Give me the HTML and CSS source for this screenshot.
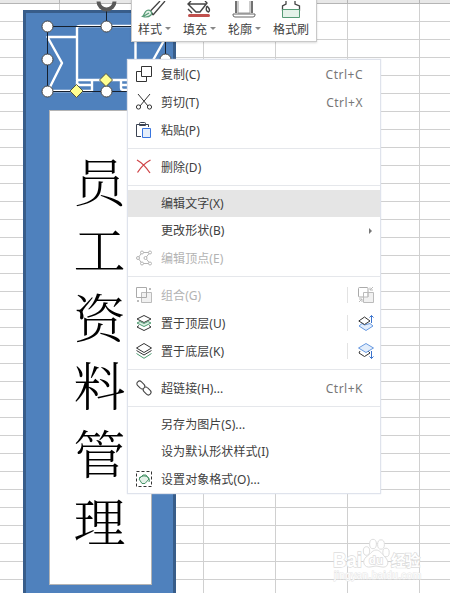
FILE: index.html
```html
<!DOCTYPE html>
<html lang="zh-CN">
<head>
<meta charset="utf-8">
<title>表格</title>
<link rel="stylesheet" href="styles.css">
</head>
<body>
<main class="sheet">
  <div class="header-strip"></div>
  <section class="binder">
    <div class="label"><span>员</span><span>工</span><span>资</span><span>料</span><span>管</span><span>理</span></div>
  </section>
  <svg class="selection" width="180" height="110" viewBox="0 0 180 110">
    <g fill="none" stroke="#fff" stroke-width="2.4" stroke-linejoin="round" stroke-linecap="round">
      <path d="M77 37H47.500L62 63L49 89V91H92V81M77 80V28Q77 26 80 26H132Q135.500 26 135.500 29V80H79Q77 80 77 82Q77 85 80 85H90M77 81V90M121 80V85H135M121 85V88Q121 90 124 90H165L152 62L166 37H136"/>
    </g>
    <path d="M47.500 26.500H165.500V91.500H47.500ZM106.500 26V8" fill="none" stroke="#16202e"/>
    <path d="M98.500 1.500A8 8 0 0 0 114.500 1.500" fill="none" stroke="#595959" stroke-width="4"/>
    <g fill="#fff" stroke="#444">
      <circle cx="47.500" cy="26.500" r="5.500"/><circle cx="106.500" cy="26.500" r="5.500"/><circle cx="165.500" cy="26.500" r="5.500"/>
      <circle cx="47.500" cy="59.500" r="5.500"/><circle cx="165.500" cy="59.500" r="5.500"/>
      <circle cx="47.500" cy="91.500" r="5.500"/><circle cx="106.500" cy="91.500" r="5.500"/>
    </g>
    <path d="M106 73.500L112.500 80L106 86.500L99.500 80ZM76.500 84.500L83 91L76.500 97.500L70 91Z" fill="#ffff91" stroke="#57573d"/>
  </svg>

  <div class="toolbar">
    <div class="tool"><svg width="30" height="20" viewBox="0 0 30 20"><path d="M22 0L11.500 11M27 0L15 14M11.500 11Q14 11 15 14" fill="none" stroke="#444" stroke-width="1.300"/><path d="M4.500 15.500C7 14 6 9 11 9Q15 11 13 14Q10 17 4.500 15.500ZM6 15L11 12" fill="#e4f2e9" stroke="#569b76" stroke-width="1.200"/></svg><b class="cap">样式<i></i></b></div>
    <div class="tool"><svg width="30" height="20" viewBox="0 0 30 20"><path d="M8 0L5 3L13 11H17L24 2L22 0M5 3H23M24 5Q28 9 25.500 11Q22 10 24 5M9 12L5 8" fill="none" stroke="#444" stroke-width="1.400"/><rect x="5" y="13" width="22" height="3" rx="1.500" fill="#c0504d"/></svg><b class="cap">填充<i></i></b></div>
    <div class="tool"><svg width="30" height="20" viewBox="0 0 30 20"><path d="M8 0V12M24 0V12" fill="none" stroke="#444" stroke-width="1.500"/><path d="M10 0V12H22V0" fill="#fff" stroke="#999"/><path d="M5 13H27V14Q27 16 25 16H7Q5 16 5 14Z" fill="#fff" stroke="#666"/></svg><b class="cap">轮廓<i></i></b></div>
    <div class="tool brush"><svg width="30" height="20" viewBox="0 0 30 20"><path d="M13 0V3L9.500 5V9H26.500V5L22 3V0" fill="none" stroke="#444" stroke-width="1.300"/><path d="M9.500 8.500H26.500V16.500H9.500Z" fill="#e4f2e9" stroke="#569b76"/></svg><b class="cap">格式刷</b></div>
  </div>

  <nav class="menu">
    <div class="row"><svg class="ico" viewBox="0 0 16 16"><path d="M5.500.500H15.500V10.500H5.500ZM5.500 5.500H.500V15.500H10.500V10.500" stroke="#333"/></svg><span>复制(C)</span><kbd>Ctrl+C</kbd></div>
    <div class="row"><svg class="ico" viewBox="0 0 16 16"><path d="M2 0L12 12M14 0L4 12" stroke="#333"/><circle cx="2.500" cy="13" r="2.100" stroke="#333"/><circle cx="13.500" cy="13" r="2.100" stroke="#333"/></svg><span>剪切(T)</span><kbd>Ctrl+X</kbd></div>
    <div class="row"><svg class="ico" viewBox="0 0 16 16"><path d="M5 14.500H.500V2.500H12.500V5M3.500 1.500Q3.500.500 4.500.500H8.500Q9.500.500 9.500 1.500V3.500H3.500Z" stroke="#3b4352"/><path d="M6.500 6.500H14.500V15.500H6.500Z" fill="#e4eefb" stroke="#3875df"/></svg><span>粘贴(P)</span></div>
    <hr>
    <div class="row"><svg class="ico" viewBox="0 0 16 16"><path d="M1 1Q8 5 14 14M14.500 1Q7 5 1.500 13.500" stroke="#cf4548" stroke-width="1.300"/></svg><span>删除(D)</span></div>
    <hr>
    <div class="row short active"><span class="ico"></span><span>编辑文字(X)</span></div>
    <div class="row short"><span class="ico"></span><span>更改形状(B)</span><i class="arrow"></i></div>
    <div class="row off"><svg class="ico" viewBox="0 0 16 16"><path d="M6 2.500H14L9.500 8L14 13.500H6L2 8Z" stroke="#b5b5b5"/><g fill="#fff" stroke="#b5b5b5"><circle cx="6" cy="2.500" r="1.500"/><circle cx="14" cy="2.500" r="1.500"/><circle cx="9.500" cy="8" r="1.500"/><circle cx="14" cy="13.500" r="1.500"/><circle cx="6" cy="13.500" r="1.500"/><circle cx="2" cy="8" r="1.500"/></g></svg><span>编辑顶点(E)</span></div>
    <hr>
    <div class="row off"><svg class="ico" viewBox="0 0 16 16"><path d="M5.500 5.500H15.500V15.500H5.500Z" fill="#f1f1f1" stroke="#bbb"/><path d="M.500.500H10.500V10.500H.500Z" stroke="#aaa"/><path d="M13 2H15M1 14H3" stroke="#bbb" stroke-width="2"/></svg><span>组合(G)</span><span class="side"><svg class="ico" viewBox="0 0 16 16"><path d="M10 5V1.500Q10 .500 9 .500H1.500Q.500.500.500 1.500V9Q.500 10 1.500 10H5" stroke="#aaa"/><path d="M10 5.500H15.500V15.500H5.500V10H10Z" fill="#f1f1f1" stroke="#bbb"/><path d="M5.500 10V5.500H10V10M12 3L15 0M12 .500V3H15M1 15L4 12M1 12H4V15" stroke="#bbb"/></svg></span></div>
    <div class="row"><svg class="ico" viewBox="0 0 16 16"><path d="M8 .500L15 4L8 7.500L1 4Z" stroke="#333"/><path d="M1 8L4 6.500L8 8.500L12 6.500L15 8L8 11.500Z" fill="#dceee4" stroke="#4f9b72"/><path d="M3 10.500L1 12L8 15.500L15 12L13 10.500" stroke="#333"/></svg><span>置于顶层(U)</span><span class="side"><svg class="ico" viewBox="0 0 16 16"><path d="M4 8.500L1 11L8 15.500L15 11L12 8.500L6.500 10Z" fill="#e2edfb" stroke="#6799e1"/><path d="M6.500 2L12 6L6.500 9.500L.800 6Z" fill="#fff" stroke="#333"/><path d="M13.500 8V.500M11.500 2.500L13.500.500L15.500 2.500" stroke="#3b73cc"/></svg></span></div>
    <div class="row"><svg class="ico" viewBox="0 0 16 16"><path d="M8 .500L15.500 5L8 9.500L.500 5ZM.500 7.500L8 12L15.500 7.500" stroke="#333"/><path d="M.500 10.500L8 15.300L15.500 10.500" stroke="#4f9b72"/></svg><span>置于底层(K)</span><span class="side"><svg class="ico" viewBox="0 0 16 16"><path d="M2 8L1 10L6.500 13.500L12 10L10 8" stroke="#333"/><path d="M8 .500L15.500 5L8 9.500L.500 5Z" fill="#e2edfb" stroke="#6799e1"/><path d="M13.500 8V15.500M11.500 13.500L13.500 15.500L15.500 13.500" stroke="#3b73cc"/></svg></span></div>
    <hr>
    <div class="row"><svg class="ico" viewBox="0 0 16 16"><g transform="translate(8 8) rotate(45) scale(.88) translate(-8 -8)" stroke="#444" stroke-width="1.200"><path d="M5.500 11H1Q-2 11 -2 8Q-2 5 1 5H5Q8 5 8 8M10.500 5H15Q18 5 18 8Q18 11 15 11H11Q8 11 8 8"/><path d="M5.500 11Q7 11 7.700 9.500M10.500 5Q9 5 8.300 6.500"/></g></svg><span>超链接(H)...</span><kbd>Ctrl+K</kbd></div>
    <hr>
    <div class="row short"><span class="ico"></span><span>另存为图片(S)...</span></div>
    <div class="row short"><span class="ico"></span><span>设为默认形状样式(I)</span></div>
    <div class="row"><svg class="ico" viewBox="0 0 16 16"><path d="M.500.500H15.500V15.500H.500Z" stroke="#333" stroke-dasharray="3 2"/><path d="M3 8L7 4H10L13 8L9 12.500H6Z" fill="#e4f2e9" stroke="#459266"/><path d="M3 7Q8 3 12.500 6.500Q14 9 13 11" stroke="#459266"/></svg><span>设置对象格式(O)...</span></div>
  </nav>

  <svg class="mark" width="96" height="50" viewBox="0 0 96 50">
    <g fill="#fff" stroke="#dedede" stroke-width="1">
      <ellipse cx="43" cy="10" rx="3.400" ry="4.700"/><ellipse cx="51" cy="10.500" rx="3.400" ry="4.700"/><ellipse cx="36.500" cy="17" rx="3.200" ry="4.300"/><ellipse cx="56" cy="18.500" rx="3.200" ry="4.300"/>
      <path d="M46 16C42 16 40 21 36 23C31 28 35 34 40 33Q46 31 52 33C58 34 60 28 55 23C52 20 50 16 46 16Z"/>
    </g>
    <g class="mark-text">
      <text x="3" y="33" font-size="20" textLength="29" lengthAdjust="spacingAndGlyphs">Bai</text>
      <text x="39" y="30" font-size="11" textLength="14">du</text>
      <text x="61" y="32" font-size="15" textLength="29">经验</text>
      <text x="4" y="45" font-size="10" textLength="87" class="url">jingyan.baidu.com</text>
    </g>
  </svg>
</main>
</body>
</html>
```
FILE: styles.css
```css
* { box-sizing: border-box; }
body { margin: 0; font-family: "Noto Sans", "Noto Sans CJK SC", sans-serif; font-size: 12px; color: #404040; }
.sheet {
  position: relative;
  width: 450px;
  height: 593px;
  overflow: hidden;
  background-color: #fff;
  background-image:
    repeating-linear-gradient(to right, #d0d0d0 0 1px, transparent 1px 72px),
    repeating-linear-gradient(to bottom, #d0d0d0 0 1px, transparent 1px 18px);
  background-position: -13px 0, 0 3px;
  background-size: 720px 100%, 100% 1800px;
}
.header-strip {
  height: 4px;
  border-bottom: 1px solid #b5b5b5;
  background: repeating-linear-gradient(to right, #b5b5b5 0 1px, #e8e8e8 1px 72px) -13px 0 / 720px 100%;
}
.binder {
  width: 153px;
  height: 600px;
  margin: 6px 0 0 23px;
  padding: 97px 22px 0 23px;
  border: 3px solid #385d8a;
  background: #4f81bd;
}
.label {
  width: 103px;
  height: 475px;
  padding: 35px 2px 0 0;
  display: flex;
  flex-direction: column;
  align-items: center;
  border: 1px solid #b4b4b4;
  background: #fff;
}
.label span {
  height: 68px;
  line-height: 68px;
  font-family: "Noto Serif CJK SC", "Noto Sans CJK SC", serif;
  font-weight: 300;
  font-size: 52px;
  color: #000;
}
.selection { position: absolute; left: 0; top: 0; }
.toolbar {
  position: absolute;
  left: 131px;
  top: -1px;
  width: 186px;
  height: 43px;
  display: flex;
  padding: 1px 0 0 6px;
  background: #fff;
  border: 1px solid #c9c9c9;
  box-shadow: 0 1px 2px rgba(0,0,0,.15);
}
.tool { width: 45px; display: flex; flex-direction: column; flex: none; }
.tool svg { display: block; height: 20px; }
.cap { font-weight: 400; line-height: 18px; white-space: nowrap; display: flex; align-items: center; gap: 3px; }
.cap i { border: 3px solid transparent; border-top-color: #888; border-bottom: 0; margin-top: -3px; }
.menu {
  position: absolute;
  left: 127px;
  top: 59px;
  width: 254px;
  height: 435px;
  border: 1px solid #dfe3ec;
  background: #fff;
  box-shadow: 0 0 1px #d5dae6;
}
.row { height: 28px; display: flex; align-items: center; padding-left: 8px; white-space: nowrap; line-height: 18px; letter-spacing: .07px; }
.row:not(.short) > span:not(.side), kbd { padding-top: 2px; }
.row.short { height: 27px; }
.row.active { background: #e5e5e5; }
.row.off { color: #b3b3b3; }
.ico { width: 16px; height: 16px; flex: none; fill: none; overflow: visible; }
.row > .ico { margin-right: 9px; }
kbd { margin-left: auto; margin-right: 17px; font: inherit; color: #777; letter-spacing: .5px; }
.arrow { margin: 0 8px 0 auto; border: 3px solid transparent; border-left: 3px solid #777; border-right: 0; }
.side { height: 16px; margin-left: auto; margin-right: 6px; padding-left: 10px; display: flex; border-left: 1px solid #e3e3e3; }
hr { height: 1px; border: 0; margin: 4px 0; background: #e5e7eb; }
.mark { position: absolute; left: 330px; top: 534px; }
.mark-text { font-family: "Liberation Sans", "Noto Sans CJK SC", sans-serif; font-weight: 700; fill: #fff; stroke: #dcdcdc; stroke-width: 1.4px; paint-order: stroke; }
.mark-text .url { font-weight: 400; stroke: #e6e6e6; stroke-width: 1px; }
```
